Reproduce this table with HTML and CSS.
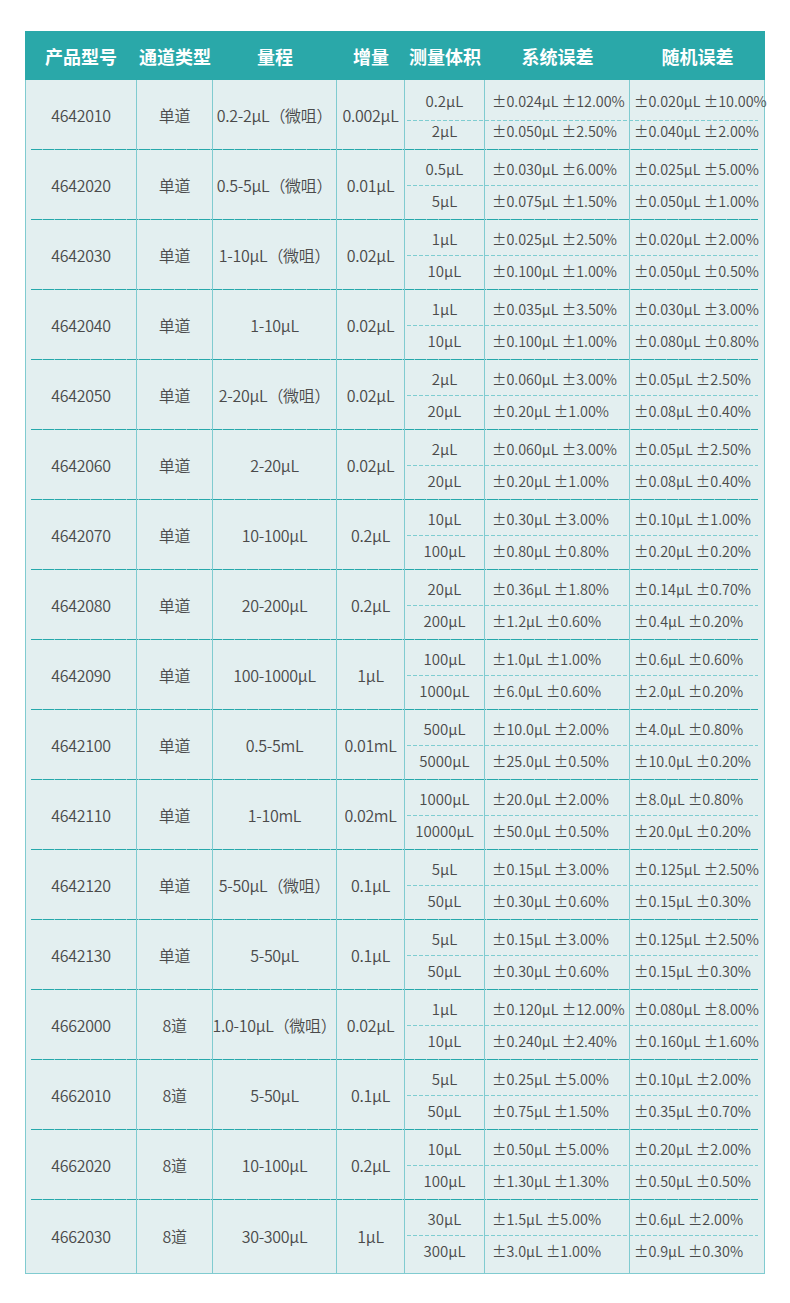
FILE: index.html
```html
<!DOCTYPE html>
<html lang="zh-CN">
<head>
<meta charset="utf-8">
<title>移液器规格表</title>
<link rel="stylesheet" href="styles.css">
</head>
<body>
<div class="table">
  <div class="thead">
    <div>产品型号</div><div>通道类型</div><div>量程</div><div>增量</div><div>测量体积</div><div>系统误差</div><div>随机误差</div>
  </div>
  <div class="tbody">
    <div class="row first">
      <div class="c">4642010</div><div class="c">单道</div><div class="c">0.2-2μL（微咀）</div><div class="c">0.002μL</div>
      <div class="meas">
        <div class="sub top"><div class="v">0.2μL</div><div class="e">±0.024μL ±12.00%</div><div class="e r">±0.020μL ±10.00%</div></div>
        <div class="sub bot"><div class="v">2μL</div><div class="e">±0.050μL ±2.50%</div><div class="e r">±0.040μL ±2.00%</div></div>
      </div>
    </div>
    <div class="row">
      <div class="c">4642020</div><div class="c">单道</div><div class="c">0.5-5μL（微咀）</div><div class="c">0.01μL</div>
      <div class="meas">
        <div class="sub top"><div class="v">0.5μL</div><div class="e">±0.030μL ±6.00%</div><div class="e r">±0.025μL ±5.00%</div></div>
        <div class="sub bot"><div class="v">5μL</div><div class="e">±0.075μL ±1.50%</div><div class="e r">±0.050μL ±1.00%</div></div>
      </div>
    </div>
    <div class="row">
      <div class="c">4642030</div><div class="c">单道</div><div class="c">1-10μL（微咀）</div><div class="c">0.02μL</div>
      <div class="meas">
        <div class="sub top"><div class="v">1μL</div><div class="e">±0.025μL ±2.50%</div><div class="e r">±0.020μL ±2.00%</div></div>
        <div class="sub bot"><div class="v">10μL</div><div class="e">±0.100μL ±1.00%</div><div class="e r">±0.050μL ±0.50%</div></div>
      </div>
    </div>
    <div class="row">
      <div class="c">4642040</div><div class="c">单道</div><div class="c">1-10μL</div><div class="c">0.02μL</div>
      <div class="meas">
        <div class="sub top"><div class="v">1μL</div><div class="e">±0.035μL ±3.50%</div><div class="e r">±0.030μL ±3.00%</div></div>
        <div class="sub bot"><div class="v">10μL</div><div class="e">±0.100μL ±1.00%</div><div class="e r">±0.080μL ±0.80%</div></div>
      </div>
    </div>
    <div class="row">
      <div class="c">4642050</div><div class="c">单道</div><div class="c">2-20μL（微咀）</div><div class="c">0.02μL</div>
      <div class="meas">
        <div class="sub top"><div class="v">2μL</div><div class="e">±0.060μL ±3.00%</div><div class="e r">±0.05μL ±2.50%</div></div>
        <div class="sub bot"><div class="v">20μL</div><div class="e">±0.20μL ±1.00%</div><div class="e r">±0.08μL ±0.40%</div></div>
      </div>
    </div>
    <div class="row">
      <div class="c">4642060</div><div class="c">单道</div><div class="c">2-20μL</div><div class="c">0.02μL</div>
      <div class="meas">
        <div class="sub top"><div class="v">2μL</div><div class="e">±0.060μL ±3.00%</div><div class="e r">±0.05μL ±2.50%</div></div>
        <div class="sub bot"><div class="v">20μL</div><div class="e">±0.20μL ±1.00%</div><div class="e r">±0.08μL ±0.40%</div></div>
      </div>
    </div>
    <div class="row">
      <div class="c">4642070</div><div class="c">单道</div><div class="c">10-100μL</div><div class="c">0.2μL</div>
      <div class="meas">
        <div class="sub top"><div class="v">10μL</div><div class="e">±0.30μL ±3.00%</div><div class="e r">±0.10μL ±1.00%</div></div>
        <div class="sub bot"><div class="v">100μL</div><div class="e">±0.80μL ±0.80%</div><div class="e r">±0.20μL ±0.20%</div></div>
      </div>
    </div>
    <div class="row">
      <div class="c">4642080</div><div class="c">单道</div><div class="c">20-200μL</div><div class="c">0.2μL</div>
      <div class="meas">
        <div class="sub top"><div class="v">20μL</div><div class="e">±0.36μL ±1.80%</div><div class="e r">±0.14μL ±0.70%</div></div>
        <div class="sub bot"><div class="v">200μL</div><div class="e">±1.2μL ±0.60%</div><div class="e r">±0.4μL ±0.20%</div></div>
      </div>
    </div>
    <div class="row">
      <div class="c">4642090</div><div class="c">单道</div><div class="c">100-1000μL</div><div class="c">1μL</div>
      <div class="meas">
        <div class="sub top"><div class="v">100μL</div><div class="e">±1.0μL ±1.00%</div><div class="e r">±0.6μL ±0.60%</div></div>
        <div class="sub bot"><div class="v">1000μL</div><div class="e">±6.0μL ±0.60%</div><div class="e r">±2.0μL ±0.20%</div></div>
      </div>
    </div>
    <div class="row">
      <div class="c">4642100</div><div class="c">单道</div><div class="c">0.5-5mL</div><div class="c">0.01mL</div>
      <div class="meas">
        <div class="sub top"><div class="v">500μL</div><div class="e">±10.0μL ±2.00%</div><div class="e r">±4.0μL ±0.80%</div></div>
        <div class="sub bot"><div class="v">5000μL</div><div class="e">±25.0μL ±0.50%</div><div class="e r">±10.0μL ±0.20%</div></div>
      </div>
    </div>
    <div class="row">
      <div class="c">4642110</div><div class="c">单道</div><div class="c">1-10mL</div><div class="c">0.02mL</div>
      <div class="meas">
        <div class="sub top"><div class="v">1000μL</div><div class="e">±20.0μL ±2.00%</div><div class="e r">±8.0μL ±0.80%</div></div>
        <div class="sub bot"><div class="v">10000μL</div><div class="e">±50.0μL ±0.50%</div><div class="e r">±20.0μL ±0.20%</div></div>
      </div>
    </div>
    <div class="row">
      <div class="c">4642120</div><div class="c">单道</div><div class="c">5-50μL（微咀）</div><div class="c">0.1μL</div>
      <div class="meas">
        <div class="sub top"><div class="v">5μL</div><div class="e">±0.15μL ±3.00%</div><div class="e r">±0.125μL ±2.50%</div></div>
        <div class="sub bot"><div class="v">50μL</div><div class="e">±0.30μL ±0.60%</div><div class="e r">±0.15μL ±0.30%</div></div>
      </div>
    </div>
    <div class="row">
      <div class="c">4642130</div><div class="c">单道</div><div class="c">5-50μL</div><div class="c">0.1μL</div>
      <div class="meas">
        <div class="sub top"><div class="v">5μL</div><div class="e">±0.15μL ±3.00%</div><div class="e r">±0.125μL ±2.50%</div></div>
        <div class="sub bot"><div class="v">50μL</div><div class="e">±0.30μL ±0.60%</div><div class="e r">±0.15μL ±0.30%</div></div>
      </div>
    </div>
    <div class="row">
      <div class="c">4662000</div><div class="c">8道</div><div class="c">1.0-10μL（微咀）</div><div class="c">0.02μL</div>
      <div class="meas">
        <div class="sub top"><div class="v">1μL</div><div class="e">±0.120μL ±12.00%</div><div class="e r">±0.080μL ±8.00%</div></div>
        <div class="sub bot"><div class="v">10μL</div><div class="e">±0.240μL ±2.40%</div><div class="e r">±0.160μL ±1.60%</div></div>
      </div>
    </div>
    <div class="row">
      <div class="c">4662010</div><div class="c">8道</div><div class="c">5-50μL</div><div class="c">0.1μL</div>
      <div class="meas">
        <div class="sub top"><div class="v">5μL</div><div class="e">±0.25μL ±5.00%</div><div class="e r">±0.10μL ±2.00%</div></div>
        <div class="sub bot"><div class="v">50μL</div><div class="e">±0.75μL ±1.50%</div><div class="e r">±0.35μL ±0.70%</div></div>
      </div>
    </div>
    <div class="row">
      <div class="c">4662020</div><div class="c">8道</div><div class="c">10-100μL</div><div class="c">0.2μL</div>
      <div class="meas">
        <div class="sub top"><div class="v">10μL</div><div class="e">±0.50μL ±5.00%</div><div class="e r">±0.20μL ±2.00%</div></div>
        <div class="sub bot"><div class="v">100μL</div><div class="e">±1.30μL ±1.30%</div><div class="e r">±0.50μL ±0.50%</div></div>
      </div>
    </div>
    <div class="row last">
      <div class="c">4662030</div><div class="c">8道</div><div class="c">30-300μL</div><div class="c">1μL</div>
      <div class="meas">
        <div class="sub top"><div class="v">30μL</div><div class="e">±1.5μL ±5.00%</div><div class="e r">±0.6μL ±2.00%</div></div>
        <div class="sub bot"><div class="v">300μL</div><div class="e">±3.0μL ±1.00%</div><div class="e r">±0.9μL ±0.30%</div></div>
      </div>
    </div>
  </div>
</div>
</body>
</html>
```

FILE: styles.css
```css
html, body {
  margin: 0;
  padding: 0;
  background: #ffffff;
}

body {
  font-family: "Noto Sans CJK SC", "Noto Sans", sans-serif;
  color: #4a4a4a;
}

.table {
  width: 740px;
  margin: 31px 0 0 25px;
}

.thead {
  display: grid;
  grid-template-columns: 112px 76px 124px 68px 80px 145px 135px;
  height: 49px;
  background: #2aa8a9;
  color: #ffffff;
  font-size: 18px;
  font-weight: 700;
}

.thead div {
  display: flex;
  align-items: center;
  justify-content: center;
  white-space: nowrap;
}

.tbody {
  background: #e3eff0;
  border: 1px solid #80cbd0;
  border-top: 0;
}

.row {
  display: grid;
  grid-template-columns: 111px 76px 124px 68px 359px;
  height: 70px;
  font-size: 16px;
  font-weight: 350;
  white-space: nowrap;
  background-image: repeating-linear-gradient(90deg, #27a8ab 0 11px, #8ed0d3 11px 12px);
  background-size: 727px 1px;
  background-position: 5px 100%;
  background-repeat: no-repeat;
}

.row.last {
  height: 73px;
  background-image: none;
}

.c {
  display: flex;
  align-items: center;
  justify-content: center;
  border-right: 1px solid #80cbd0;
  padding-bottom: 1px;
  letter-spacing: -0.3px;
}

.meas {
  display: flex;
  flex-direction: column;
  font-size: 14.4px;
}

.sub {
  display: grid;
  grid-template-columns: 80px 145px 134px;
  line-height: 30px;
}

.sub.top {
  height: 36px;
  background-image: repeating-linear-gradient(90deg, #7ecdd1 0 4px, transparent 4px 6px);
  background-size: 351px 1px;
  background-position: 2px 100%;
  background-repeat: no-repeat;
}

.sub.top > div {
  padding-top: 4px;
}

.sub.bot {
  flex: 1;
}

.first .sub.top {
  height: 41px;
}

.first .sub.top > div {
  padding-top: 6px;
}

.first .sub.bot {
  line-height: 20px;
}

.v {
  text-align: center;
  border-right: 1px solid #80cbd0;
  font-size: 15px;
}

.e {
  padding-left: 7px;
  border-right: 1px solid #80cbd0;
}

.e.r {
  padding-left: 4px;
  border-right: 0;
}
```
